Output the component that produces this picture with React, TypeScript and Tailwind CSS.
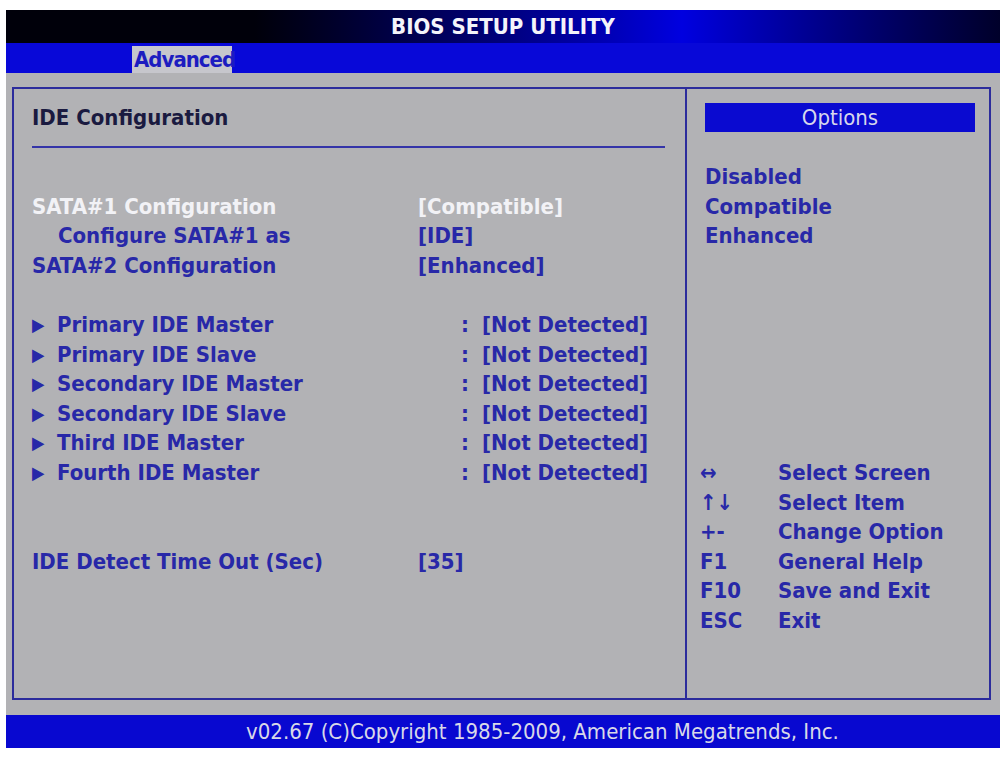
const font = "font-['DejaVu_Sans_Condensed','DejaVu_Sans',sans-serif]";

const drives = [
  'Primary IDE Master',
  'Primary IDE Slave',
  'Secondary IDE Master',
  'Secondary IDE Slave',
  'Third IDE Master',
  'Fourth IDE Master',
];

const keys = [
  ['↔', 'Select Screen'],
  ['↑↓', 'Select Item'],
  ['+-', 'Change Option'],
  ['F1', 'General Help'],
  ['F10', 'Save and Exit'],
  ['ESC', 'Exit'],
];

function Row({ children, className = '' }: { children?: React.ReactNode; className?: string }) {
  return <div className={`h-[29.6px] flex items-center whitespace-nowrap ${className}`}>{children}</div>;
}

function Setting({ label, value, indent, white }: { label: string; value: string; indent?: boolean; white?: boolean }) {
  return (
    <Row className={white ? 'text-[#f2f2f6]' : 'text-[#2828a8]'}>
      <span className={`w-[386px] ${indent ? 'pl-[26px]' : ''}`}>{label}</span>
      <span>{value}</span>
    </Row>
  );
}

export default function App() {
  return (
    <div className={`w-[1003px] h-[757px] bg-white pl-[6px] pr-[3px] pt-[10px] pb-[9px] ${font} font-bold text-[22px] leading-none`}>
      <div className="h-full flex flex-col bg-[#b2b2b5]">
        {/* Title */}
        <div className="h-[33px] flex items-center justify-center bg-linear-to-r from-[#00000a] from-25% via-[#0000e0] via-68% to-[#00002a] text-[#f4f4fa]">
          BIOS SETUP UTILITY
        </div>

        {/* Tabs */}
        <div className="h-[30px] flex items-end bg-[#0808d8] pl-[126px]">
          <div className="h-[27px] w-[100px] flex items-center pl-[2px] bg-[#c6c6cc] text-[#1c1cc0] tracking-[-1px]">Advanced</div>
        </div>

        {/* Main */}
        <div className="flex-1 flex pl-[6px] pr-[9px] pt-[14px] pb-[15px]">
          <div className="w-[673px] border-2 border-r-0 border-[#2c2c9c] pl-[18px] pt-[14px] text-[#2828a8]">
            <Row className="text-[#1a1a40]">IDE Configuration</Row>
            <Row>
              <div className="w-[633px] h-[2px] bg-[#3434a8]" />
            </Row>
            <Row />
            <Setting label="SATA#1 Configuration" value="[Compatible]" white />
            <Setting label="Configure SATA#1 as" value="[IDE]" indent />
            <Setting label="SATA#2 Configuration" value="[Enhanced]" />
            <Row />
            {drives.map((d) => (
              <Row key={d}>
                <span className="w-[25px] text-[18px]">▶</span>
                <span className="w-[404px]">{d}</span>
                <span className="w-[21px]">:</span>
                <span>[Not Detected]</span>
              </Row>
            ))}
            <Row />
            <Row />
            <Setting label="IDE Detect Time Out (Sec)" value="[35]" />
          </div>

          <div className="flex-1 border-2 border-[#2c2c9c] pl-[13px] pr-[14px] pt-[14px] text-[#2828a8]">
            <Row className="pl-[5px]">
              <div className="w-full h-[29px] flex items-center justify-center bg-[#0a0ad0] text-[#d6d6ec] font-normal">Options</div>
            </Row>
            <Row />
            <Row className="pl-[5px]">Disabled</Row>
            <Row className="pl-[5px]">Compatible</Row>
            <Row className="pl-[5px]">Enhanced</Row>
            {Array.from({ length: 7 }).map((_, i) => (
              <Row key={i} />
            ))}
            {keys.map(([k, d]) => (
              <Row key={k}>
                <span className="w-[78px]">{k}</span>
                <span>{d}</span>
              </Row>
            ))}
          </div>
        </div>

        {/* Footer */}
        <div className="h-[33px] flex items-center pl-[240px] bg-[#0808d0] text-[#d8d8e8] font-normal text-[22px] whitespace-nowrap">
          v02.67 (C)Copyright 1985-2009, American Megatrends, Inc.
        </div>
      </div>
    </div>
  );
}
